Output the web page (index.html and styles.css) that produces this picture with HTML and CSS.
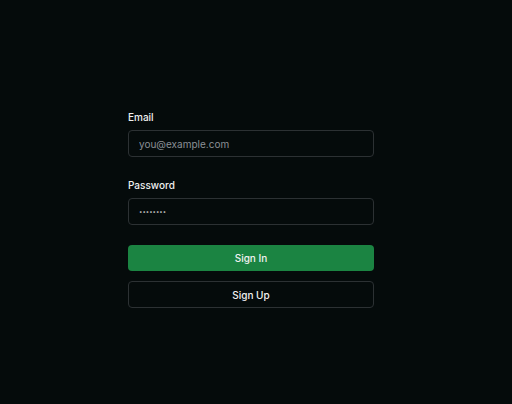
FILE: index.html
```html
<!DOCTYPE html>
<html lang="en">
<head>
<meta charset="utf-8">
<title>Sign In</title>
<link rel="stylesheet" href="styles.css">
</head>
<body>
<main class="auth">
  <form class="auth-form">
    <div class="field">
      <label class="field-label" for="email">Email</label>
      <input class="field-input" id="email" type="email" placeholder="you@example.com">
    </div>
    <div class="field">
      <label class="field-label" for="password">Password</label>
      <input class="field-input field-password" id="password" type="password" value="password">
    </div>
    <div class="actions">
      <button type="button" class="btn btn-primary">Sign In</button>
      <button type="button" class="btn btn-outline">Sign Up</button>
    </div>
  </form>
</main>
</body>
</html>
```
FILE: styles.css
```css
* { box-sizing: border-box; }
html, body {
  margin: 0;
  height: 100%;
  background: #050b0b;
}
body {
  font-family: Inter, "Noto Sans", sans-serif;
  color: #ececec;
}
.auth {
  display: flex;
  justify-content: center;
  padding-top: 110px;
  padding-right: 10px;
}
.auth-form {
  width: 246px;
  display: flex;
  flex-direction: column;
  gap: 21px;
}
.field {
  display: flex;
  flex-direction: column;
  gap: 6px;
}
.field-label {
  font-size: 10px;
  line-height: 14px;
  font-weight: 500;
  color: #f0f0f0;
}
.field-input {
  height: 27px;
  width: 100%;
  background: #050b0b;
  border: 1px solid #2c3133;
  border-radius: 4px;
  padding: 0 10px;
  font-family: inherit;
  font-size: 10px;
  color: #d0d0d0;
  outline: none;
}
.field-input::placeholder { color: #8b9096; }
.field-password {
  font-size: 6px;
  letter-spacing: 0px;
  color: #c0c0c0;
}
.actions {
  display: flex;
  flex-direction: column;
  gap: 10px;
  margin-top: -1px;
}
.btn {
  width: 100%;
  border-radius: 4px;
  font-family: inherit;
  font-size: 10px;
  font-weight: 500;
  color: #f2f2f2;
  cursor: pointer;
}
.btn-primary {
  height: 26px;
  background: #1b8442;
  border: none;
}
.btn-outline {
  height: 27px;
  background: transparent;
  border: 1px solid #2c3133;
}
```
